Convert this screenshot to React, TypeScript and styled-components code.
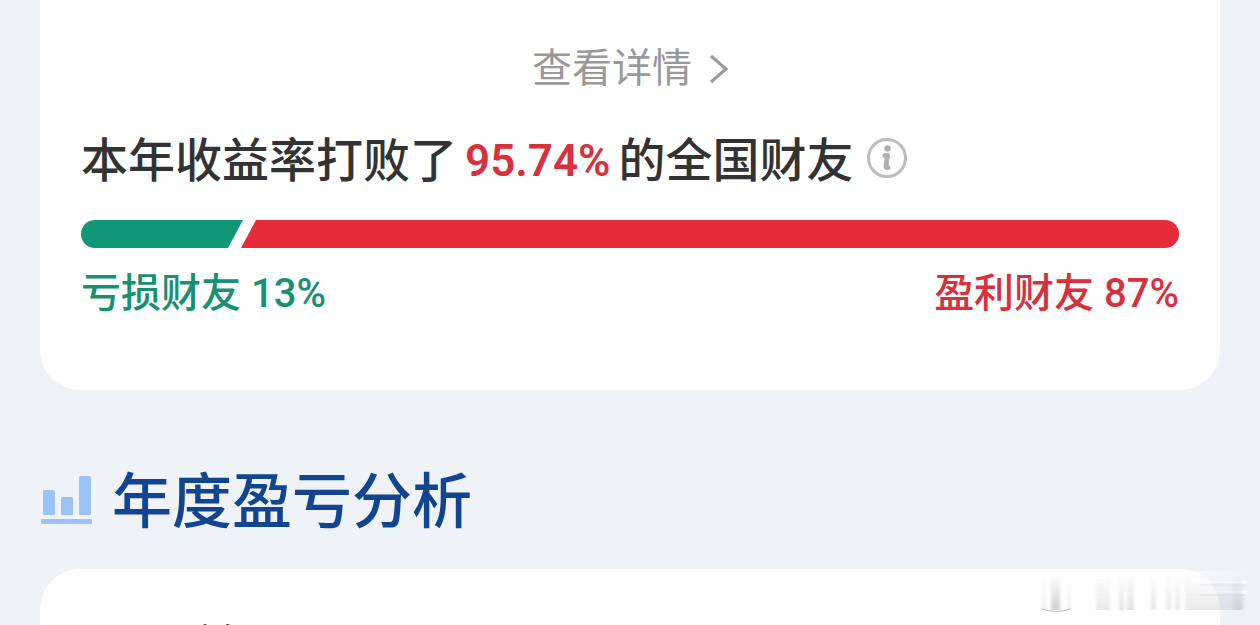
import React from "react";
import styled, { createGlobalStyle } from "styled-components";

const GlobalStyle = createGlobalStyle`
  *, *::before, *::after { box-sizing: border-box; }
  html, body { margin: 0; height: 100%; overflow: hidden; background: #eff3f8; }
  body { font-family: Roboto, "Noto Sans CJK SC", sans-serif; }
  #root { height: 100%; }
`;

const Page = styled.main`
  position: relative;
  height: 100%;
  overflow: hidden;
  padding: 0 40px;
`;

const Card = styled.section<{ $continued?: boolean }>`
  padding: 0 41px;
  background: #fff;
  border-radius: ${(p) => (p.$continued ? "0 0 40px 40px" : "40px 40px 0 0")};
`;

const SummaryCard = styled(Card)`
  display: flex;
  flex-direction: column;
  padding-top: 37px;
  padding-bottom: 64px;
`;

const DetailsLink = styled.a`
  display: flex;
  align-self: center;
  align-items: center;
  gap: 16px;
  color: #999;
  font-size: 40px;
  line-height: 64px;
  text-decoration: none;
`;

const Headline = styled.h2`
  display: flex;
  align-items: center;
  margin: 24px 0 0;
  color: #333;
  font-size: 47px;
  font-weight: 500;
  line-height: 72px;
`;

const Rate = styled.strong`
  margin: 0 8px;
  color: #d9303e;
  font-size: 44px;
  font-weight: 600;
`;

const InfoButton = styled.button`
  display: flex;
  margin: 0 0 4px 12px;
  padding: 0;
  border: 0;
  background: none;
  cursor: pointer;
`;

const RatioBar = styled.div`
  display: flex;
  height: 28px;
  margin-top: 23px;
  border-radius: 14px;
  overflow: hidden;
`;

const LossPart = styled.div`
  width: 162px;
  background: #109876;
  clip-path: polygon(0 0, 100% 0, calc(100% - 15px) 100%, 0 100%);
`;

const ProfitPart = styled.div`
  flex: 1;
  margin-left: -2px;
  background: #e62c3a;
  clip-path: polygon(15px 0, 100% 0, 100% 100%, 0 100%);
`;

const Legend = styled.div`
  display: flex;
  justify-content: space-between;
  margin-top: 14px;
  font-size: 40px;
  font-weight: 500;
  line-height: 64px;
`;

const LegendItem = styled.span<{ $color: string }>`
  color: ${(p) => p.$color};
`;

const SectionTitle = styled.h1`
  display: flex;
  align-items: center;
  gap: 19px;
  margin: 63px 0 22px;
  color: #124590;
  font-size: 60px;
  font-weight: 500;
  line-height: 88px;
`;

const SectionName = styled.span`
  padding-top: 6px;
`;

const AnalysisCard = styled(Card)`
  padding-top: 47px;
  height: 160px;
`;

const AnalysisTitle = styled.h2`
  margin: 0;
  color: #333;
  font-size: 54px;
  font-weight: 500;
  line-height: 72px;
`;

const Watermark = styled.svg`
  position: absolute;
  right: 0;
  bottom: 0;
`;

const smears = [
  { x: 13, w: 2, o: 0.2 },
  { x: 21, w: 9, o: 0.35 },
  { x: 38, w: 2, o: 0.2 },
  { x: 66, w: 14, o: 0.16 },
  { x: 89, w: 5, o: 0.2 },
  { x: 97, w: 7, o: 0.22 },
  { x: 121, w: 5, o: 0.18 },
  { x: 136, w: 5, o: 0.15 },
  { x: 145, w: 5, o: 0.15 },
  { x: 155, w: 58, o: 0.16 },
  { x: 203, w: 10, o: 0.12 },
];

export default function App() {
  return (
    <>
      <GlobalStyle />
      <Page>
        <SummaryCard $continued>
          <DetailsLink href="#details">
            查看详情
            <svg width="20" height="30" viewBox="0 0 20 30" fill="none" aria-hidden="true">
              <path d="M3 2 L18 15 L3 28" stroke="#999" strokeWidth="3" />
            </svg>
          </DetailsLink>
          <Headline>
            本年收益率打败了<Rate>95.74%</Rate>的全国财友
            <InfoButton aria-label="说明">
              <svg width="42" height="42" viewBox="0 0 42 42" fill="none">
                <circle cx="21" cy="20" r="18.5" stroke="#bdbdbd" strokeWidth="3" />
                <circle cx="21.5" cy="10.5" r="3.2" fill="#b0b0b0" />
                <path
                  d="M19 17.5 H21.5 L20 28 Q20 30 22 29.5"
                  stroke="#b0b0b0"
                  strokeWidth="5"
                  strokeLinejoin="round"
                  strokeLinecap="round"
                />
              </svg>
            </InfoButton>
          </Headline>
          <RatioBar>
            <LossPart />
            <ProfitPart />
          </RatioBar>
          <Legend>
            <LegendItem $color="#179172">亏损财友 13%</LegendItem>
            <LegendItem $color="#d9303e">盈利财友 87%</LegendItem>
          </Legend>
        </SummaryCard>
        <SectionTitle>
          <svg width="53" height="50" viewBox="0 0 53 50" fill="#9bc3f8" aria-hidden="true">
            <rect x="3" y="15" width="12" height="25" rx="1.5" />
            <rect x="21" y="22" width="12" height="18" rx="1.5" />
            <rect x="39" y="1" width="12" height="39" rx="1.5" />
            <rect x="1" y="44" width="51" height="5" rx="1" />
          </svg>
          <SectionName>年度盈亏分析</SectionName>
        </SectionTitle>
        <AnalysisCard>
          <AnalysisTitle>最　单日</AnalysisTitle>
        </AnalysisCard>
        <Watermark width="230" height="60" viewBox="0 0 230 60" aria-hidden="true">
          <defs>
            <linearGradient id="smear" x1="0" y1="0" x2="0" y2="1">
              <stop offset="0" stopColor="#777" stopOpacity="0" />
              <stop offset="1" stopColor="#777" />
            </linearGradient>
            <linearGradient id="glow" x1="0" y1="0" x2="1" y2="0">
              <stop offset="0" stopColor="#fff" />
              <stop offset="1" stopColor="#fff" stopOpacity="0" />
            </linearGradient>
            <filter id="soften" x="-5%" y="-20%" width="110%" height="140%">
              <feGaussianBlur stdDeviation="1.8 0.4" />
            </filter>
          </defs>
          <rect x="155" y="6" width="62" height="24" fill="url(#glow)" opacity="0.7" />
          <g filter="url(#soften)">
            {smears.map((s) => (
              <rect key={s.x} x={s.x} y="10" width={s.w} height="35" fill="url(#smear)" opacity={s.o} />
            ))}
          </g>
          <path d="M12 44 Q26 49 40 44" fill="none" stroke="#bbb" strokeWidth="1" />
          <path d="M212 17 H217 M212 27 H217" stroke="#fff" strokeWidth="3" />
          <path d="M170 17 H212 M170 27 H212" stroke="#fff" strokeWidth="2" opacity="0.4" />
          <path d="M170 20 H217 M170 30 H217" stroke="#bbb" strokeWidth="1" opacity="0.3" />
        </Watermark>
      </Page>
    </>
  );
}
